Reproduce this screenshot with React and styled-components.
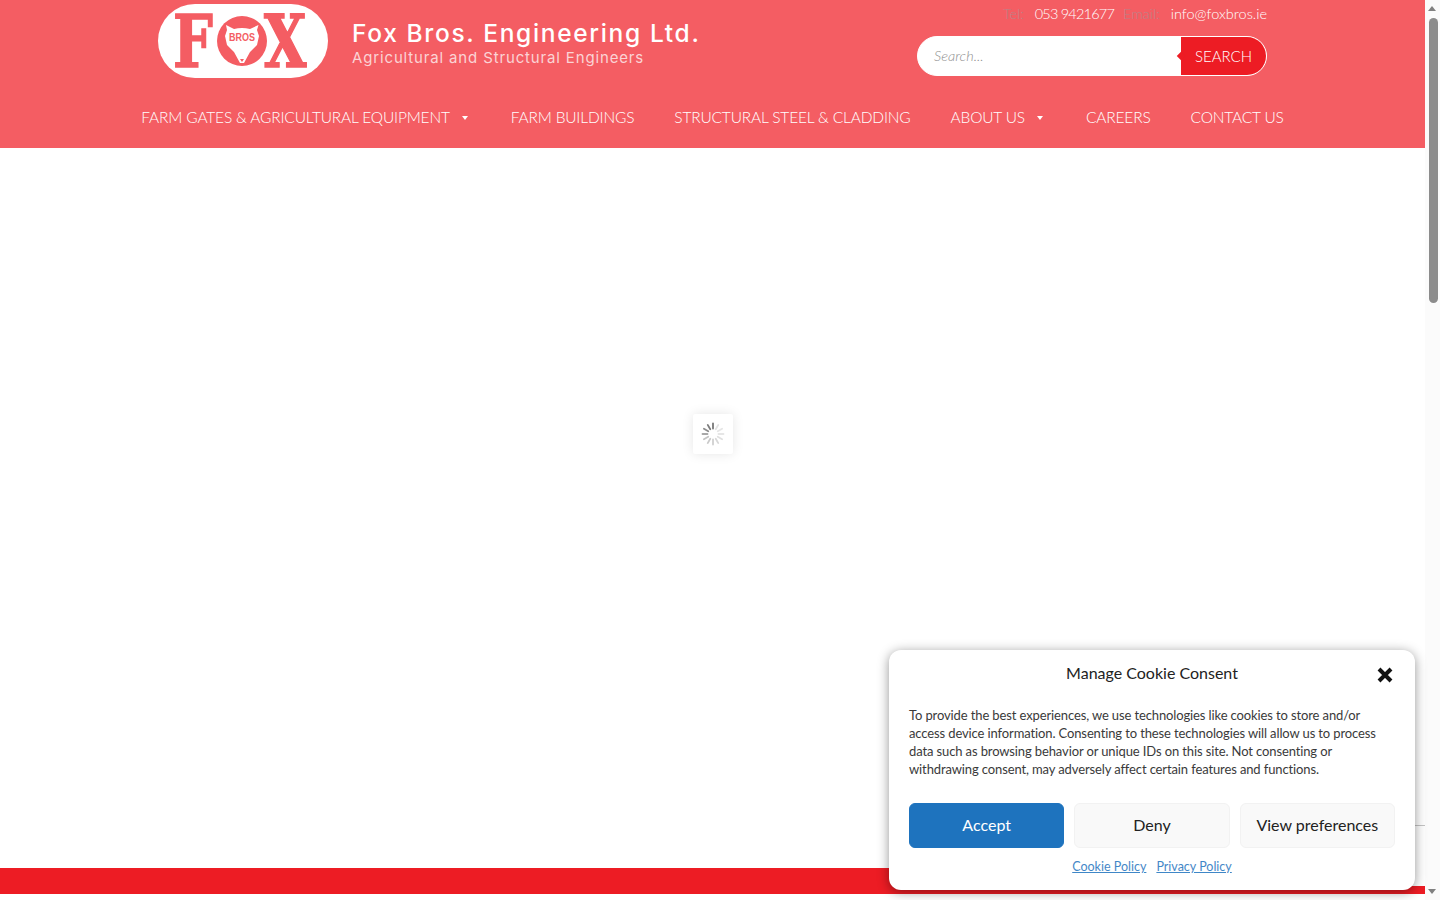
import React from 'react';
import styled, { createGlobalStyle } from 'styled-components';

const GlobalStyle = createGlobalStyle`
html, body {
    margin: 0;
    padding: 0;
    height: 100%;
    overflow: hidden;
    background: #ffffff;
}
* { box-sizing: border-box; }
`;

const StyledWindow = styled.div`
    display: flex;
    width: 1440px;
    height: 900px;
    overflow: hidden;
    position: relative;
    font-family: Lato, "Open Sans", sans-serif;
`;

const StyledPage = styled.div`
    display: flex;
    flex-direction: column;
    width: 1425px;
    height: 900px;
    background: #ffffff;
`;

const StyledHeader = styled.header`
    height: 148px;
    background-color: #f45d63;
    display: flex;
    flex-direction: column;
`;

const StyledTopRow = styled.div`
    display: flex;
    justify-content: space-between;
    height: 98px;
    padding: 4px 158px 0;
`;

const StyledBrand = styled.div`
    display: flex;
    align-items: flex-start;
    gap: 24px;
`;

const StyledLogoPill = styled.div`
    width: 170px;
    height: 74px;
    border-radius: 37px;
    background: #ffffff;
    display: flex;
    align-items: center;
    padding-left: 15px;
    color: #f45d63;
    font-family: "DejaVu Serif", serif;
    font-weight: 700;
    font-size: 72px;
    line-height: 74px;
`;

const StyledLogoLetter = styled.span`
    display: block;
    flex: none;
    margin-top: 1px;
    margin-right: ${(props) => props.$pull}px;
    transform: scaleX(${(props) => props.$stretch});
    transform-origin: left center;
    -webkit-text-stroke: 1.5px #f45d63;
`;

const StyledFoxBadge = styled.svg`
    position: relative;
    width: 50px;
    height: 50px;
    flex: none;
    margin: -1px -3px 0 0;
`;

const StyledBrandText = styled.div`
    display: flex;
    flex-direction: column;
    padding-top: 15px;
`;

const StyledBrandName = styled.div`
    color: #ffffff;
    font-family: Inter, sans-serif;
    font-size: 24.5px;
    line-height: 28px;
    font-weight: 500;
    letter-spacing: 1.65px;
    white-space: nowrap;
`;

const StyledBrandTag = styled.div`
    color: #fbd3d5;
    font-family: Inter, sans-serif;
    font-size: 15px;
    line-height: 20px;
    letter-spacing: 0.85px;
    margin-top: 1px;
    white-space: nowrap;
`;

const StyledContactBlock = styled.div`
    width: 350px;
    display: flex;
    flex-direction: column;
    align-items: flex-end;
`;

const StyledContactRow = styled.div`
    display: flex;
    align-items: center;
    height: 20px;
    margin-top: -1px;
    font-size: 14.5px;
    font-weight: 300;
    color: #ffffff;
    white-space: nowrap;
`;

const StyledContactLabel = styled.span`
    color: #b9848a;
    margin: 0 11px 0 ${(props) => props.$before}px;
`;

const StyledPhone = styled.span`
    letter-spacing: -0.8px;
`;

const StyledSearch = styled.div`
    width: 350px;
    height: 40px;
    margin-top: 13px;
    display: flex;
    border: 1px solid #ffffff;
    border-radius: 20px;
    background: #ffffff;
    overflow: hidden;
`;

const StyledSearchInput = styled.div`
    flex: 1;
    padding-left: 16px;
    line-height: 38px;
    color: #8f8f8f;
    font-size: 14.5px;
    font-style: italic;
    font-weight: 300;
`;

const StyledSearchButton = styled.div`
    position: relative;
    width: 85px;
    background: #ed1c24;
    color: #ffffff;
    font-size: 15px;
    font-weight: 300;
    line-height: 38px;
    text-align: center;

    &::before {
        content: '';
        position: absolute;
        left: -3px;
        top: 16px;
        width: 6px;
        height: 6px;
        background: #ed1c24;
        transform: rotate(45deg);
    }
`;

const StyledNav = styled.nav`
    display: flex;
    justify-content: center;
    gap: 40px;
    height: 38px;
    align-items: center;
`;

const StyledNavItem = styled.div`
    display: flex;
    align-items: center;
    color: #ffffff;
    font-size: 15.5px;
    font-weight: 300;
    letter-spacing: -0.17px;
    white-space: nowrap;

    ${(props) => props.$caret && `
        &::after {
            content: '';
            width: 0;
            height: 0;
            border-left: 3px solid transparent;
            border-right: 3px solid transparent;
            border-top: 4px solid #ffffff;
            margin: 1px 3px 0 12px;
        }
    `}
`;

const StyledMain = styled.main`
    flex: 1;
    display: flex;
    justify-content: center;
    align-items: flex-start;
    padding-top: 266px;
`;

const StyledLoader = styled.div`
    width: 40px;
    height: 40px;
    background: #ffffff;
    box-shadow: 0 0 12px rgb(0 0 0 / 10%);
    border-radius: 2px;
    display: flex;
    align-items: center;
    justify-content: center;
    margin-left: 1px;
`;

const StyledFooterBar = styled.div`
    height: 26px;
    background: #ed1c24;
    margin-bottom: 6px;
`;

const StyledScrollbar = styled.div`
    width: 15px;
    height: 900px;
    background: #fbfbfb;
    display: flex;
    flex-direction: column;
    align-items: center;
    position: relative;
`;

const StyledArrow = styled.div`
    position: absolute;
    left: 3px;
    ${(props) => (props.$down ? 'bottom: 6px;' : 'top: 6px;')}
    width: 0;
    height: 0;
    border-left: 4.5px solid transparent;
    border-right: 4.5px solid transparent;
    ${(props) => (props.$down ? 'border-top: 5px solid #808080;' : 'border-bottom: 5px solid #808080;')}
`;

const StyledThumb = styled.div`
    width: 9px;
    height: 285px;
    margin-top: 18px;
    margin-left: 1px;
    border-radius: 5px;
    background: #8c8c8c;
`;

const StyledBadge = styled.div`
    position: absolute;
    top: 825px;
    left: 1370px;
    width: 55px;
    height: 61px;
    background: #ffffff;
    border-top: 1px solid #c4c4c4;
`;

const StyledCookieCard = styled.div`
    position: absolute;
    left: 889px;
    top: 650px;
    width: 526px;
    height: 240px;
    padding: 12px 20px 0;
    background: #ffffff;
    border-radius: 12px;
    box-shadow: 0 2px 12px rgb(0 0 0 / 42%);
    color: #222222;
`;

const StyledCookieHeader = styled.div`
    position: relative;
    height: 24px;
    text-align: center;
    font-size: 16px;
    line-height: 22px;
    color: #222222;
`;

const StyledClose = styled.svg`
    position: absolute;
    right: 1px;
    top: 4px;
    width: 18px;
    height: 18px;
`;

const StyledCookieText = styled.p`
    margin: 20px 0 0;
    padding-bottom: 4px;
    font-size: 13px;
    color: #3a3a3a;
    white-space: nowrap;

    span {
        display: block;
        line-height: 18px;
        letter-spacing: -0.12px;
    }
`;

const StyledButtonRow = styled.div`
    display: flex;
    gap: 10px;
    margin-top: 21px;
`;

const StyledCookieButton = styled.div`
    flex: 1;
    height: 45px;
    line-height: 41px;
    text-align: center;
    font-size: 16px;
    border-radius: 6px;
    border: 1px solid ${(props) => (props.$primary ? '#1e73be' : '#f2f2f2')};
    background: ${(props) => (props.$primary ? '#1e73be' : '#f9f9f9')};
    color: ${(props) => (props.$primary ? '#ffffff' : '#222222')};
`;

const StyledLinks = styled.div`
    display: flex;
    justify-content: center;
    gap: 10px;
    margin-top: 10px;
    font-size: 12.5px;
    line-height: 17px;
`;

const StyledLink = styled.a`
    color: #1e73be;
    text-decoration: underline;
    opacity: 0.85;
`;

const spokes = [0, 30, 60, 90, 120, 150, 180, 210, 240, 270, 300, 330];
const spokeColors = ['#777', '#e2e2e2', '#e6e6e6', '#e6e6e6', '#e0e0e0', '#d8d8d8', '#d0d0d0', '#cacaca', '#c4c4c4', '#a8a8a8', '#8e8e8e', '#7c7c7c'];

const Spinner = () => (
    <svg width="24" height="24" viewBox="0 0 24 24">
        {spokes.map((angle, i) => (
            <line
                key={angle}
                x1="12"
                y1="1.5"
                x2="12"
                y2="6.5"
                stroke={spokeColors[i]}
                strokeWidth="1.8"
                strokeLinecap="round"
                transform={`rotate(${angle} 12 12)`}
            />
        ))}
    </svg>
);

const FoxBadge = () => (
    <StyledFoxBadge viewBox="0 0 50 50">
        <circle cx="25" cy="25" r="25" fill="#f45d63" />
        <path d="M9 9 L17 13 Q25 11 33 13 L41.5 9 L40 14 L42 20 L40 29 L33 36 L27 47 L23 47 L17 36 L10 29 L8 20 L10 14 Z" fill="#ffffff" />
        <path d="M23 43 L27 43 L25 46 Z" fill="#f45d63" />
        <text x="25" y="24.5" textAnchor="middle" fontFamily="Liberation Sans, sans-serif" fontWeight="700" fontSize="11.5" fill="#f45d63" textLength="26" lengthAdjust="spacingAndGlyphs">BROS</text>
    </StyledFoxBadge>
);

const App = () => (
    <>
        <GlobalStyle />
        <StyledWindow>
            <StyledPage>
                <StyledHeader>
                    <StyledTopRow>
                        <StyledBrand>
                            <StyledLogoPill>
                                <StyledLogoLetter $pull={-7} $stretch={0.78}>F</StyledLogoLetter>
                                <FoxBadge />
                                <StyledLogoLetter $pull={-10} $stretch={0.76}>X</StyledLogoLetter>
                            </StyledLogoPill>
                            <StyledBrandText>
                                <StyledBrandName>Fox Bros. Engineering Ltd.</StyledBrandName>
                                <StyledBrandTag>Agricultural and Structural Engineers</StyledBrandTag>
                            </StyledBrandText>
                        </StyledBrand>
                        <StyledContactBlock>
                            <StyledContactRow>
                                <StyledContactLabel $before={0}>Tel:</StyledContactLabel>
                                <StyledPhone>053 9421677</StyledPhone>
                                <StyledContactLabel $before={9}>Email:</StyledContactLabel>
                                info@foxbros.ie
                            </StyledContactRow>
                            <StyledSearch>
                                <StyledSearchInput>Search...</StyledSearchInput>
                                <StyledSearchButton>SEARCH</StyledSearchButton>
                            </StyledSearch>
                        </StyledContactBlock>
                    </StyledTopRow>
                    <StyledNav>
                        <StyledNavItem $caret>FARM GATES &amp; AGRICULTURAL EQUIPMENT</StyledNavItem>
                        <StyledNavItem>FARM BUILDINGS</StyledNavItem>
                        <StyledNavItem>STRUCTURAL STEEL &amp; CLADDING</StyledNavItem>
                        <StyledNavItem $caret>ABOUT US</StyledNavItem>
                        <StyledNavItem>CAREERS</StyledNavItem>
                        <StyledNavItem>CONTACT US</StyledNavItem>
                    </StyledNav>
                </StyledHeader>
                <StyledMain>
                    <StyledLoader><Spinner /></StyledLoader>
                </StyledMain>
                <StyledFooterBar />
            </StyledPage>
            <StyledScrollbar>
                <StyledArrow />
                <StyledThumb />
                <StyledArrow $down />
            </StyledScrollbar>
            <StyledBadge />
            <StyledCookieCard>
                <StyledCookieHeader>
                    Manage Cookie Consent
                    <StyledClose viewBox="0 0 18 18">
                        <path d="M3 3 L15 15 M15 3 L3 15" stroke="#111111" strokeWidth="4" />
                    </StyledClose>
                </StyledCookieHeader>
                <StyledCookieText>
                    <span>To provide the best experiences, we use technologies like cookies to store and/or</span>
                    <span>access device information. Consenting to these technologies will allow us to process</span>
                    <span>data such as browsing behavior or unique IDs on this site. Not consenting or</span>
                    <span>withdrawing consent, may adversely affect certain features and functions.</span>
                </StyledCookieText>
                <StyledButtonRow>
                    <StyledCookieButton $primary>Accept</StyledCookieButton>
                    <StyledCookieButton>Deny</StyledCookieButton>
                    <StyledCookieButton>View preferences</StyledCookieButton>
                </StyledButtonRow>
                <StyledLinks>
                    <StyledLink>Cookie Policy</StyledLink>
                    <StyledLink>Privacy Policy</StyledLink>
                </StyledLinks>
            </StyledCookieCard>
        </StyledWindow>
    </>
);

export default App;
